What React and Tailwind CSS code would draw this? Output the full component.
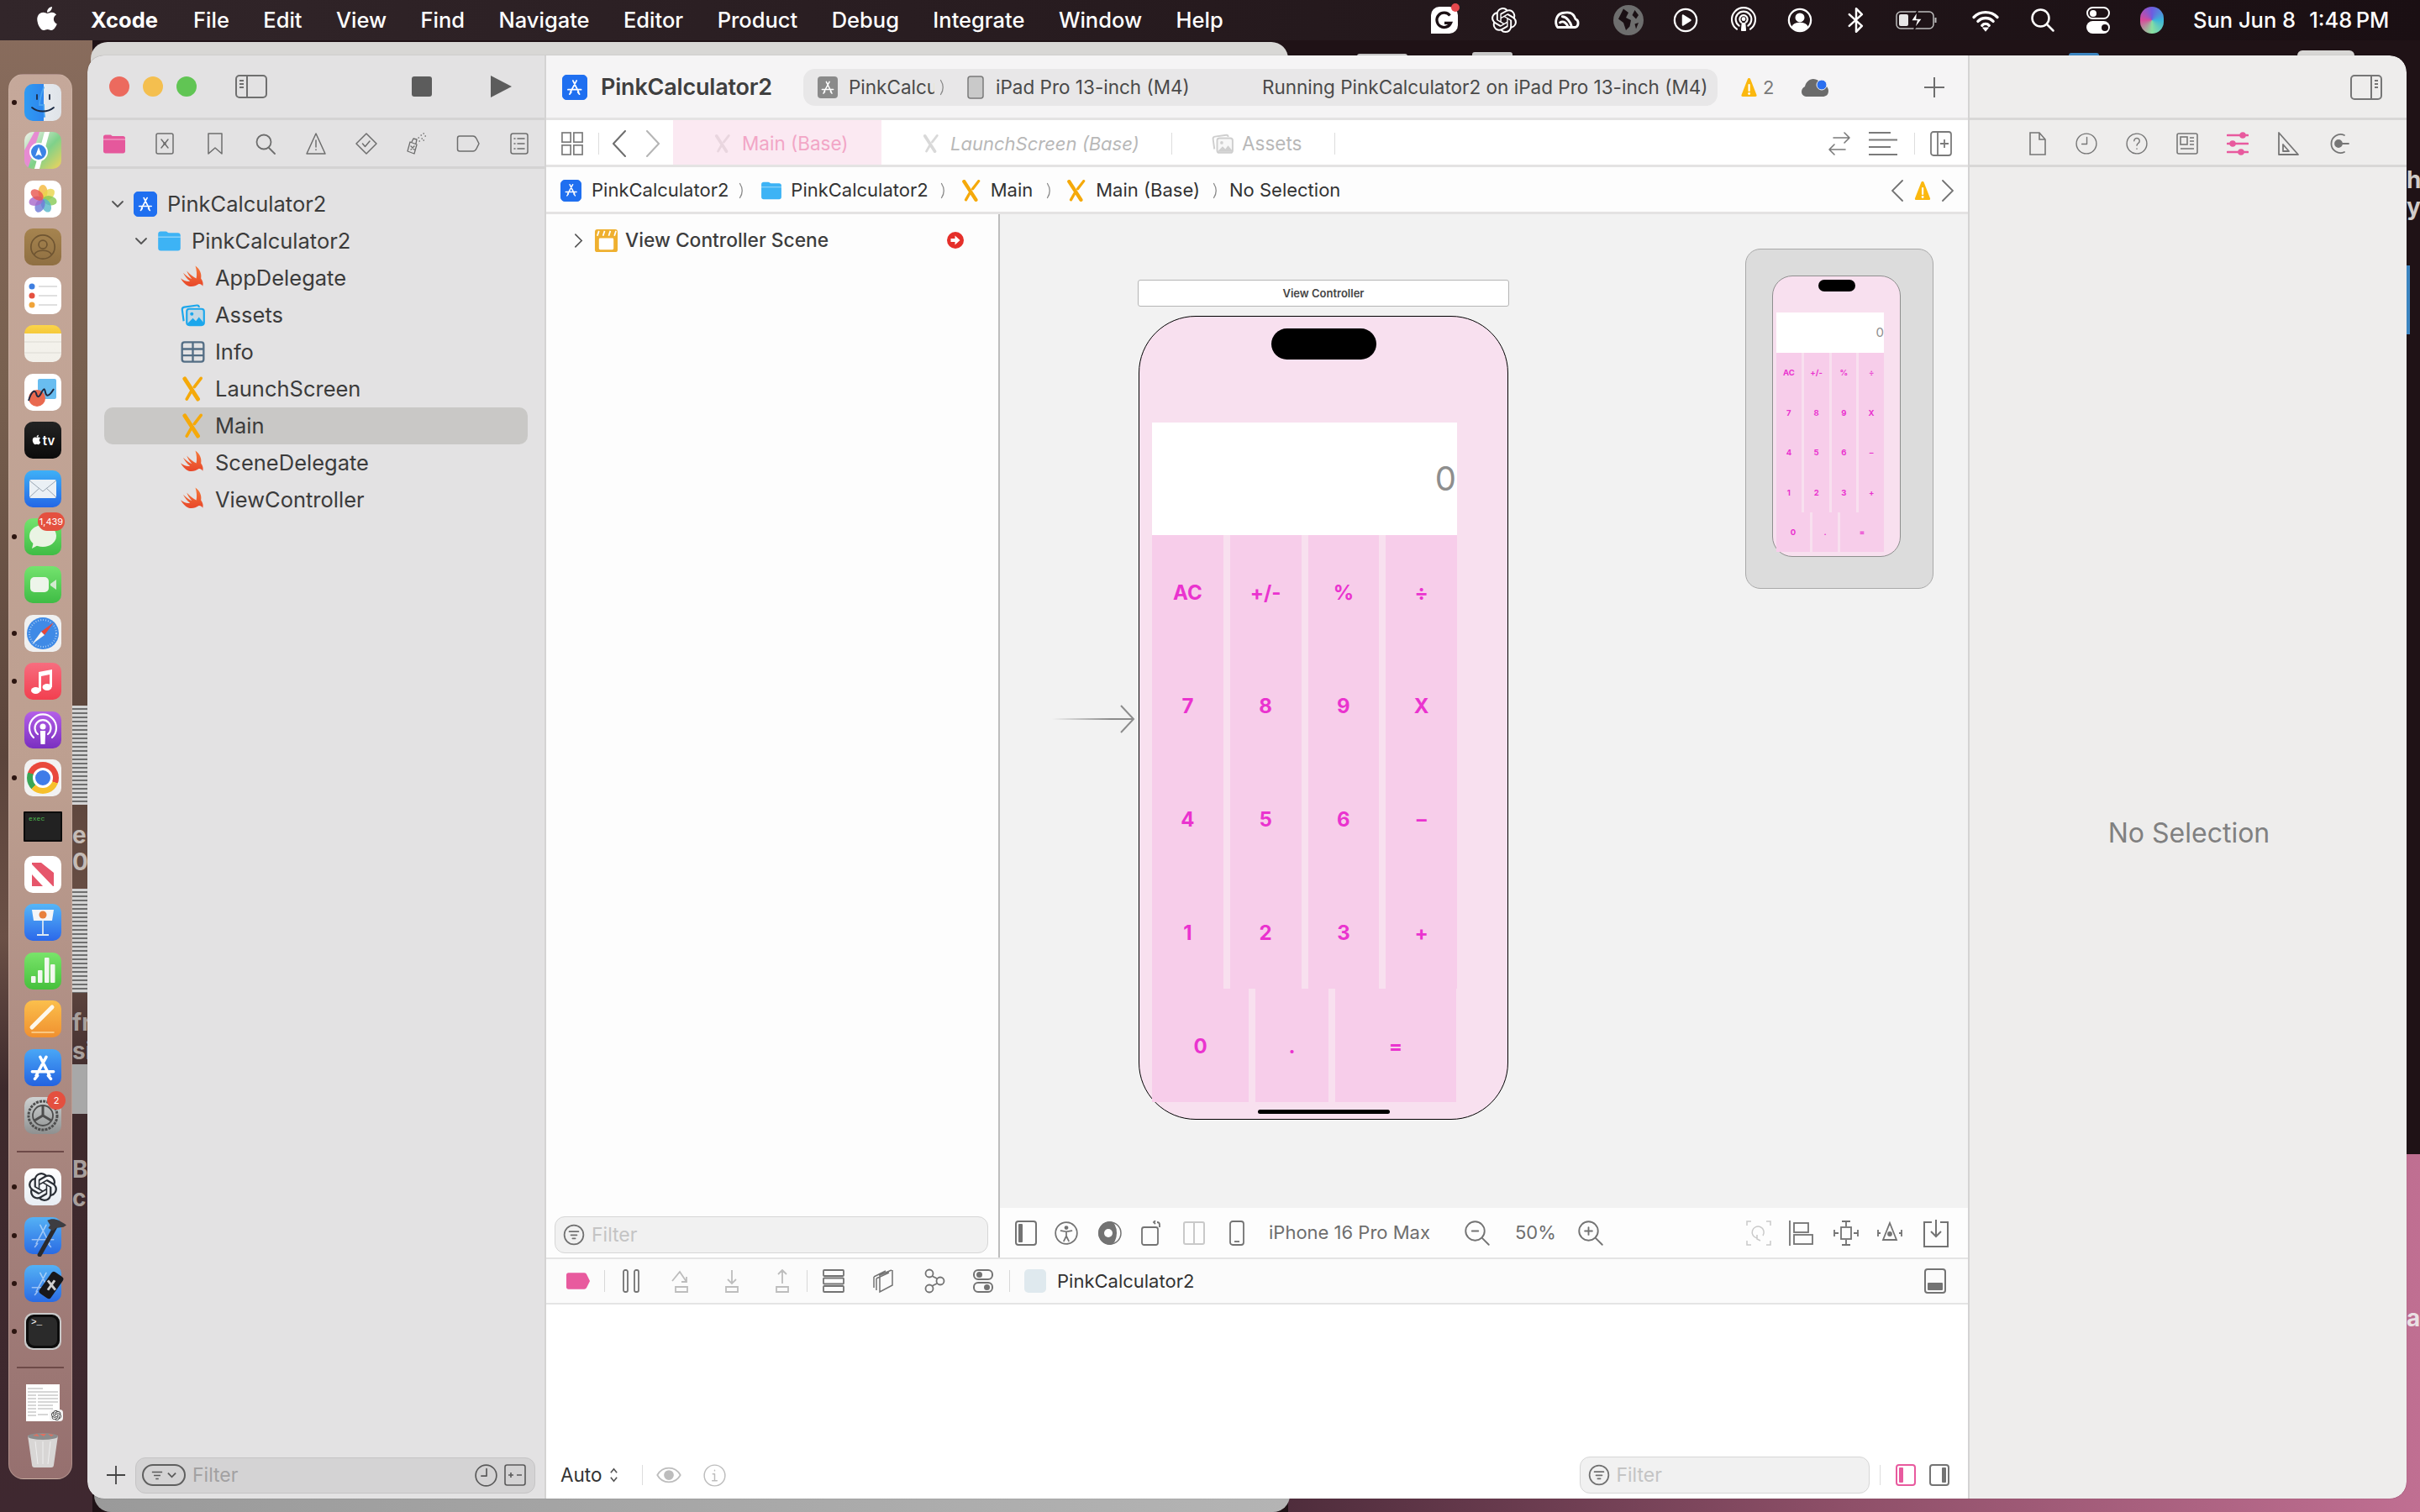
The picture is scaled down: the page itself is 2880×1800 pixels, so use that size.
import React from 'react';
import { FaApple } from 'react-icons/fa';
import { SiOpenai } from 'react-icons/si';

const I = ({ c = '', children, v = '0 0 24 24', sw = 1.5 }) => (
  <svg viewBox={v} fill="none" stroke="currentColor" strokeWidth={sw} strokeLinecap="round" strokeLinejoin="round" className={c}>{children}</svg>
);

const AGlyph = ({ c = '', sw = 1.8 }) => (
  <I c={c} sw={sw}><path d="M10 4l7 14M14.5 4L7 18M4 15h16M16 18l2 2.5M8 18l-2 2.5" /></I>
);
const AppIcon = ({ c = '' }) => (
  <div className={`rounded-[5px] bg-[#1f6ff0] border border-[#1f6ff0] flex items-center justify-center shrink-0 text-white ${c}`}>
    <AGlyph c="w-[84%] h-[84%]" />
  </div>
);
const Swift = ({ c = '' }) => (
  <svg viewBox="0 0 24 24" className={c}>
    <defs><linearGradient id="sw" x1="0" y1="0" x2="0" y2="1"><stop offset="0" stopColor="#f5793a" /><stop offset="1" stopColor="#e8472a" /></linearGradient></defs>
    <path fill="url(#sw)" d="M14.5 0c4.2 3 6.500 7.500 5.500 12.500 1.800 2.300 2.500 5 1.700 7.500-.9-1.700-2.500-2.400-4.200-2-2.400 1.900-6.500 3-10 1.800C4.500 18.500 1.800 15.600 0 12.200c2.800 2.400 6.200 3.600 9.200 3C6.500 13 4 10 2.400 6.800c2.800 2.700 6 5 8.600 6.200-2.200-2.600-4-5.300-5-8 3.200 3.400 6.600 6.200 9.400 7.400C16.200 8.800 15.800 4 14.500 0z" />
  </svg>
);
const IB = ({ c = '', col = '#f5a90a' }) => (
  <svg viewBox="0 0 24 24" className={c} fill="none" stroke={col} strokeLinecap="round">
    <path d="M4 2l13 20" strokeWidth="4" />
    <path d="M20 1.500L13.500 10M10 15l-4 7" strokeWidth="3" />
  </svg>
);
const Folder = ({ c = '' }) => (
  <svg viewBox="0 0 24 22" className={c}><path fill="#3db3f5" d="M1 4c0-1.600 1-2.500 2.500-2.500h5c1.500 0 2 1.500 3 1.500h9C22 3 23 4 23 5.500V18c0 1.600-1 2.500-2.500 2.500h-17C2 20.500 1 19.600 1 18z" /><path stroke="#fff" strokeOpacity=".5" d="M1 7h22" /></svg>
);
const AssetsIcon = ({ c = '', col = '#1ca7ec' }) => (
  <svg viewBox="0 0 24 24" className={c} fill="none" stroke={col} strokeWidth="1.800" strokeLinejoin="round">
    <rect x="6" y="6" width="17" height="16" rx="2.500" fill={col} fillOpacity=".16" />
    <path d="M3 18l-1.500-11c-.2-1.500.6-2.500 2-2.700L16 2.500c1.400-.2 2 .6 2.200 2" />
    <circle cx="11" cy="11" r="1.700" fill={col} stroke="none" />
    <path d="M7 20l5-5 3 3 3-4 5 6v1H7z" fill={col} stroke="none" />
  </svg>
);
const Warn = ({ c = '' }) => (
  <svg viewBox="0 0 20 24" className={c}><path fill="#fbb80f" d="M10 1c.9 0 1.400.5 1.700 1.300L19 21c.4 1.200-.3 2-1.500 2h-15C1.300 23 .6 22.200 1 21L8.300 2.300C8.600 1.500 9.100 1 10 1z" /><rect x="9" y="8" width="2.200" height="9" rx="1" fill="#fff" /><circle cx="10.100" cy="19.500" r="1.400" fill="#fff" /></svg>
);
const Chev = ({ c = '' }) => (
  <svg viewBox="0 0 8 20" className={`w-[8px] h-[20px] text-[#8a8a8a] shrink-0 ${c}`} fill="none" stroke="currentColor" strokeWidth="1.300" strokeLinecap="round"><path d="M1.500 1.500Q7 10 1.500 18.500" /></svg>
);
const Filt = ({ c = '' }) => (
  <I c={c} sw={1.600}><circle cx="12" cy="12" r="10.500" /><path d="M7 8.500h10M8.800 12.300h6.400M10.500 16h3" /></I>
);

const Badge = ({ children, c }) => (
  <div className={`absolute rounded-full bg-[#e4503f] text-white text-[11px] h-[22px] flex items-center justify-center z-10 ${c}`}>{children}</div>
);
const Dot = () => <div className="absolute -left-[15px] top-[19px] w-[6px] h-[6px] rounded-full bg-[#2c1510]" />;

const Tile = ({ c = '', children, dot, extra }) => (
  <div className="relative w-[44px] h-[44px] shrink-0">
    {dot && <Dot />}
    <div className={`w-full h-full rounded-[10px] overflow-hidden flex items-center justify-center ${c}`}>{children}</div>
    {extra}
  </div>
);

function Dock() {
  const Sep = () => <div className="w-[56px] h-[2px] bg-[#6e4a48] my-[6px] -ml-[6px] shrink-0" />;
  return (
    <div className="w-[76px] h-[1673px] mt-[40px] ml-[10px] shrink-0 rounded-[18px] bg-gradient-to-b from-[#c5a89a] via-[#bd9f90] to-[#96706f] border border-[#d5bdb2]/40 flex flex-col items-center gap-[13.450px] pt-[11px] pl-[6px] relative z-10">
      <Tile dot c="bg-[linear-gradient(90deg,#2e9bf3_0,#2e86ee_52%,#e6eaef_52%,#dfe3e8_100%)]">
        <svg viewBox="0 0 44 44" className="w-full h-full" fill="none" stroke="#1b2a44" strokeWidth="1.800" strokeLinecap="round"><path d="M23 4c-3 8-5 14-5 21h5c0 5 0 8 1 14" stroke="#4aa4f0" /><path d="M15 13v5M30 13v5M9 28c7 6 19 6 26 0" /></svg>
      </Tile>
      <Tile c="bg-[linear-gradient(135deg,#f5f3ee_0,#7fd18a_55%,#f3d35a_100%)]">
        <svg viewBox="0 0 44 44" className="w-full h-full"><path d="M0 22L12 0h6L4 44H0z" fill="#e78bd2" /><path d="M24 0h6L18 44h-6z" fill="#fff" /><circle cx="17" cy="24" r="10" fill="#3b83e6" stroke="#fff" strokeWidth="2" /><path d="M17 18l-4 11 4-2 4 2z" fill="#fff" /></svg>
      </Tile>
      <Tile c="bg-white">
        <svg viewBox="0 0 44 44" className="w-full h-full">
          {[['#f4b73a', 0], ['#e9d44a', 51], ['#86c955', 102], ['#56b7c9', 153], ['#6b78d6', 204], ['#a866c9', 255], ['#e8554e', 306]].map(([f, r]) => (
            <ellipse key={r} cx="22" cy="13.500" rx="5.500" ry="8.500" fill={f} fillOpacity=".8" transform={`rotate(${r} 22 22)`} />
          ))}
        </svg>
      </Tile>
      <Tile c="bg-[linear-gradient(180deg,#a6844f,#8f6f42)]">
        <I c="w-[34px] h-[34px] text-[#6f5532]" sw={1.200}><circle cx="12" cy="12" r="10" /><circle cx="12" cy="10" r="3.500" /><path d="M5 18c2-4 12-4 14 0" /></I>
      </Tile>
      <Tile c="bg-white">
        <svg viewBox="0 0 44 44" className="w-full h-full"><circle cx="9" cy="11" r="3.500" fill="#3f7fe0" /><circle cx="9" cy="22" r="3.500" fill="#e4503f" /><circle cx="9" cy="33" r="3.500" fill="#f0a43a" /><path d="M17 11h22M17 22h22M17 33h22" stroke="#d6d6d6" strokeWidth="1.400" /></svg>
      </Tile>
      <Tile c="bg-[linear-gradient(180deg,#fbd44b_0,#f5c93a_22%,#f4f2ec_22%,#f2f0ea_100%)]">
        <svg viewBox="0 0 44 44" className="w-full h-full"><path d="M0 20h44M0 33h44" stroke="#dcdad3" strokeWidth="1" /></svg>
      </Tile>
      <Tile c="bg-white">
        <svg viewBox="0 0 44 44" className="w-full h-full" fill="none"><rect x="16" y="6" width="22" height="24" rx="2" fill="#69bdf0" /><circle cx="15" cy="29" r="10" fill="#e9694f" /><path d="M5 32c3-10 7-14 9-9 1 5 3 6 6 0s4-6 5-1 4 6 10-4" stroke="#1f2b44" strokeWidth="2" /></svg>
      </Tile>
      <Tile c="bg-[linear-gradient(180deg,#232323,#0b0b0b)] text-white gap-[1px]">
        <FaApple className="text-[13px] -mt-[2px]" /><span className="text-[15px] font-semibold leading-none">tv</span>
      </Tile>
      <Tile c="bg-[linear-gradient(180deg,#3eb0f7,#2467e6)]">
        <svg viewBox="0 0 44 44" className="w-full h-full"><rect x="6" y="11" width="32" height="22" rx="2" fill="#eaf0f5" /><path d="M6 12l16 13 16-13M6 32l12-11M38 32L26 21" stroke="#9aa6b2" strokeWidth="1" fill="none" /></svg>
      </Tile>
      <Tile dot c="bg-[linear-gradient(180deg,#74e36e,#3fbc45)]" extra={<Badge c="w-[32px] left-[16px] -top-[7px]">1,439</Badge>}>
        <svg viewBox="0 0 44 44" className="w-full h-full"><ellipse cx="22" cy="21" rx="16" ry="13" fill="#eaf4e4" /><path d="M11 28l-2 8 9-5z" fill="#eaf4e4" /></svg>
      </Tile>
      <Tile c="bg-[linear-gradient(180deg,#74e36e,#3fbc45)]">
        <svg viewBox="0 0 44 44" className="w-full h-full"><rect x="7" y="13" width="22" height="18" rx="5" fill="#edf5ea" /><path d="M31 21l7-5v12l-7-5z" fill="#d3ead0" /></svg>
      </Tile>
      <Tile dot c="bg-[#f0f0f0]">
        <svg viewBox="0 0 44 44" className="w-full h-full"><circle cx="22" cy="22" r="19" fill="#3f8ae6" /><circle cx="22" cy="22" r="16" fill="none" stroke="#a4c9f2" strokeWidth="2" strokeDasharray="1 2" /><path d="M20 20l15-11-11 15z" fill="#e5473a" /><path d="M20 20L9 35l15-11z" fill="#f5f5f5" /></svg>
      </Tile>
      <Tile dot c="bg-[linear-gradient(180deg,#f76d7f,#f23f4f)]">
        <svg viewBox="0 0 44 44" className="w-full h-full" fill="#fff"><path d="M17 11l16-3v21h-3V14l-10 2v18h-3z" /><ellipse cx="13.500" cy="33" rx="5.500" ry="4" /><ellipse cx="27" cy="29" rx="5.500" ry="4" /></svg>
      </Tile>
      <Tile c="bg-[linear-gradient(180deg,#b45fe8,#7a2fc0)]">
        <svg viewBox="0 0 44 44" className="w-full h-full" fill="none" stroke="#fff" strokeWidth="2.200" strokeLinecap="round"><path d="M11 31a16 16 0 1 1 22 0M16 27a9.500 9.500 0 1 1 12 0" /><circle cx="22" cy="18" r="3.500" fill="#fff" stroke="none" /><path d="M20 24h4l-.5 14h-3z" fill="#fff" stroke="#fff" /></svg>
      </Tile>
      <Tile dot c="bg-[#f2f2f2]">
        <div className="w-[38px] h-[38px] rounded-full bg-[conic-gradient(#e9493c_0deg_110deg,#f6c02c_110deg_225deg,#3aa655_225deg_290deg,#e9493c_290deg)] flex items-center justify-center">
          <div className="w-[18px] h-[18px] rounded-full bg-[#3f7ce8] border-[3px] border-white box-content" />
        </div>
      </Tile>
      <div className="relative w-[46px] h-[36px] my-[4px] shrink-0 bg-[#222] border-[2px] border-[#0b0b0b] pl-[4px] text-[#4dbb4f] text-[8px] leading-[14px] [font-family:'Liberation_Mono',monospace] rounded-[1px]">exec</div>
      <Tile c="bg-white">
        <svg viewBox="0 0 44 44" className="w-full h-full"><rect x="9" y="8" width="26" height="28" fill="#e6566b" /><path d="M9 10l25 26H22L9 22zM20 8h15v12z" fill="#fff" /></svg>
      </Tile>
      <Tile c="bg-[linear-gradient(180deg,#56b6f7,#2b68ea)]">
        <svg viewBox="0 0 44 44" className="w-full h-full"><path d="M9 7h26l-2 13H11z" fill="#f4f6f8" /><circle cx="22" cy="13" r="4.500" fill="#e8803c" /><path d="M22 20v17M15 37h14" stroke="#dbe7f2" strokeWidth="1.800" /></svg>
      </Tile>
      <Tile c="bg-[linear-gradient(180deg,#79e46a,#46c03c)]">
        <svg viewBox="0 0 44 44" className="w-full h-full" fill="#f2f8ef"><rect x="8" y="28" width="5.500" height="8" rx="1" /><rect x="16" y="21" width="5.500" height="15" rx="1" /><rect x="24" y="6" width="5.500" height="30" rx="1" /><rect x="31" y="14" width="5.500" height="22" rx="1" /></svg>
      </Tile>
      <Tile c="bg-[linear-gradient(180deg,#fbbf4c,#f0902f)]">
        <svg viewBox="0 0 44 44" className="w-full h-full" fill="none" strokeLinecap="round"><path d="M9 32L33 8" stroke="#fdf8ec" strokeWidth="5" /><path d="M9 38h26" stroke="#fdd89b" strokeWidth="1.500" /></svg>
      </Tile>
      <Tile c="bg-[linear-gradient(180deg,#49a7f6,#2362e0)] text-white">
        <AGlyph c="w-[38px] h-[38px]" sw={2.200} />
      </Tile>
      <Tile c="bg-[linear-gradient(180deg,#cfd2d2,#8e9090)]" extra={<Badge c="w-[22px] left-[27px] -top-[7px]">2</Badge>}>
        <svg viewBox="0 0 44 44" className="w-full h-full" fill="none" stroke="#4d4d4d"><circle cx="22" cy="22" r="17" strokeWidth="3" strokeDasharray="3 1.200" /><circle cx="22" cy="22" r="12" strokeWidth="1.800" /><path d="M22 22V11M22 22l10 6M22 22l-10 6" strokeWidth="3" /></svg>
      </Tile>
      <Sep />
      <Tile dot c="bg-[linear-gradient(180deg,#fff,#e8edf3)] text-[#2a2f36]"><SiOpenai className="text-[34px]" /></Tile>
      <Tile dot c="bg-[linear-gradient(180deg,#54b1f5,#2a6be3)] !overflow-visible !rounded-[10px]" >
        <AGlyph c="w-[38px] h-[38px] text-white/50" sw={1} />
        <svg viewBox="0 0 44 44" className="absolute -top-[3px] -left-[0px] w-[50px] h-[50px]"><path d="M34 10L16 42" stroke="#2a2a2e" strokeWidth="4.500" strokeLinecap="round" /><path d="M24 6c6-3 12-1 20 5l-3 2-8 1-3 3-5-3 2-3z" fill="#3d3d42" /></svg>
      </Tile>
      <Tile dot c="bg-[linear-gradient(180deg,#54b1f5,#2a6be3)] !overflow-visible">
        <AGlyph c="w-[38px] h-[38px] text-white/50" sw={1} />
        <svg viewBox="0 0 44 44" className="absolute top-[6px] left-[14px] w-[36px] h-[36px]"><rect x="12" y="3" width="20" height="38" rx="4" transform="rotate(35 22 22)" fill="#18181b" /><path d="M17 15l11 14M27 15L17 29" stroke="#cfcfcf" strokeWidth="3.500" /></svg>
      </Tile>
      <Tile dot c="bg-[#c9c9c9] p-[2px]">
        <div className="w-full h-full rounded-[9px] bg-[#0c0c0c] p-[3px]">
          <div className="w-full h-full rounded-[7px] bg-[#2a2a2a] text-white text-[11px] leading-[12px] pl-[3px] [font-family:'Liberation_Mono',monospace]">&gt;_</div>
        </div>
      </Tile>
      <Sep />
      <div className="relative w-[40px] h-[44px] shrink-0 bg-white">
        <svg viewBox="0 0 40 44" className="w-full h-full" stroke="#9b9b9b" strokeWidth=".8"><path d="M2 5h18M2 9h36M2 13h10M14 13h24M2 17h10M14 17h24M2 21h10M14 21h24M2 25h10M14 25h18M2 29h10M14 29h18M2 33h10M2 37h10M14 36h12" /></svg>
        <div className="absolute -right-[4px] bottom-0 w-[16px] h-[14px] rounded-[4px] bg-[#f3f3f3] flex items-center justify-center text-[#333]"><SiOpenai className="text-[12px]" /></div>
      </div>
      <svg viewBox="0 0 44 44" className="w-[44px] h-[44px] -mt-[2px] shrink-0"><path d="M4 5h36l-5 35c-.2 2-1 3-3 3H12c-2 0-2.800-1-3-3z" fill="#d8d6d5" /><ellipse cx="22" cy="6" rx="18" ry="4" fill="#8c8c8c" /><path d="M10 5l5-2 3 3zM18 3l5 3 3-3zM28 3l4 3 3-2z" fill="#e07060" /><path d="M13 12l3 27M22 12v27M31 12l-3 27" stroke="#eeeeee" strokeWidth="1" /></svg>
    </div>
  );
}

const Menu = () => {
  const labels = ['File', 'Edit', 'View', 'Find', 'Navigate', 'Editor', 'Product', 'Debug', 'Integrate', 'Window', 'Help'];
  return (
    <div className="relative z-20 h-[48px] flex items-center bg-[linear-gradient(90deg,#32262a,#261a1e_50%,#1a0f13)] text-white text-[25.500px] shrink-0">
      <FaApple className="ml-[40px] text-[32px] -mt-[4px]" />
      <span className="ml-[36px] font-bold w-[82px]">Xcode</span>
      <div className="flex ml-[40px] gap-[40.400px]">{labels.map((l) => <span key={l} className="font-medium">{l}</span>)}</div>
      <div className="absolute left-[1703px] top-0 h-[48px] flex items-center text-white">
        <div className="relative w-[32px] h-[32px] bg-white rounded-[10px] rounded-bl-none text-[#1a0f13] flex items-center justify-center shrink-0">
          <svg viewBox="0 0 24 24" className="w-[26px] h-[26px]" fill="none" stroke="currentColor" strokeWidth="3"><path d="M18 7a8 8 0 1 0 1 8h-7" /></svg>
          <div className="absolute -top-[4px] right-[-2px] w-[10px] h-[10px] rounded-full bg-[#e5484d]" />
        </div>
        <SiOpenai className="ml-[40px] text-[30px] shrink-0" />
        <I c="ml-[42px] w-[36px] h-[34px] shrink-0" sw={2}><path d="M4 18c-3-4-1-11 4-12s9-1 11 5c3 1 3 6 0 7zM8 9c3 0 7 4 8 9M6 14c3-2 6 1 7 4" /></I>
        <div className="ml-[37px] w-[36px] h-[36px] rounded-full bg-[#6e6e6e] shrink-0 flex items-center justify-center text-[#1a0f13]">
          <svg viewBox="0 0 24 24" className="w-full h-full" fill="currentColor"><path d="M8 3l4 3-2 4 4 2-1 5-3 3-2-6-4-3zM17 4l3 4-2 3-3-3zM17 15l3-1-2 5z" /></svg>
        </div>
        <I c="ml-[35px] w-[30px] h-[30px] shrink-0" sw={1.800}><circle cx="12" cy="12" r="10.500" /><path d="M9.500 7.500l7 4.500-7 4.500z" fill="currentColor" /></I>
        <I c="ml-[38px] w-[32px] h-[32px] shrink-0" sw={1.600}><path d="M6 20a10.500 10.500 0 1 1 12 0M8 17a7 7 0 1 1 8 0M10 14a3.500 3.500 0 1 1 4 0" /><circle cx="12" cy="11" r="1" fill="currentColor" /><path d="M11 15h2l.5 6h-3z" fill="currentColor" /></I>
        <I c="ml-[36px] w-[30px] h-[30px] shrink-0" sw={1.800}><circle cx="12" cy="12" r="10.500" /><circle cx="12" cy="9.500" r="3.500" fill="currentColor" /><path d="M5 18.500c2-4.500 12-4.500 14 0-3 3.500-11 3.500-14 0z" fill="currentColor" /></I>
        <I c="ml-[41px] w-[22px] h-[34px] shrink-0" sw={1.800} v="0 0 16 24"><path d="M2 7l11 10-5 5V2l5 5L2 17" /></I>
        <svg viewBox="0 0 52 24" className="ml-[36px] w-[52px] h-[26px] shrink-0" fill="none" stroke="#bdbdbd" strokeWidth="1.500"><rect x="1" y="2" width="44" height="20" rx="5" /><path d="M47.500 9v6" strokeWidth="2" /><path d="M26 1l-8 12h7l-3 10 10-13h-7z" fill="#fff" stroke="#1a0f13" /><rect x="4" y="5" width="11" height="14" rx="2" fill="#e6e6e6" stroke="none" /></svg>
        <svg viewBox="0 0 24 20" className="ml-[38px] w-[34px] h-[28px] shrink-0" fill="none" stroke="#fff" strokeWidth="2.400" strokeLinecap="round"><path d="M2 7.500a14 14 0 0 1 20 0M5.500 11a9 9 0 0 1 13 0M9 14.500a4 4 0 0 1 6 0" /><path d="M12 19l-2-2.500h4z" fill="#fff" strokeWidth="1" /></svg>
        <I c="ml-[36px] w-[30px] h-[30px] shrink-0" sw={2}><circle cx="10" cy="10" r="8" /><path d="M16 16l6 6" /></I>
        <div className="ml-[37px] w-[28px] h-[32px] shrink-0 flex flex-col gap-[2px]">
          <div className="h-[15px] rounded-full border-[2px] border-white flex items-center pl-[2px]"><div className="w-[8px] h-[8px] rounded-full bg-white" /></div>
          <div className="h-[15px] rounded-full bg-white flex items-center justify-end pr-[2px]"><div className="w-[8px] h-[8px] rounded-full bg-[#1a0f13]" /></div>
        </div>
        <div className="ml-[36px] w-[28px] h-[32px] rounded-full bg-[conic-gradient(#6e5be0,#3bb5d9,#8ae0a0,#d84a9a,#6e5be0)] shrink-0" />
        <span className="ml-[35px] font-medium whitespace-nowrap">Sun Jun 8</span>
        <span className="ml-[16px] font-medium whitespace-nowrap">1:48{'\u2009'}PM</span>
      </div>
    </div>
  );
};

const TreeRow = ({ pl, chev, icon, label, sel }) => (
  <div className={`h-[44px] flex items-center text-[25.500px] text-[#3b3b3b] ${sel ? 'bg-[#c9c8c6] rounded-[10px]' : ''}`}>
    <div className={pl}>{chev && <svg viewBox="0 0 16 10" className="w-[16px] h-[10px] text-[#555]" fill="none" stroke="currentColor" strokeWidth="1.800" strokeLinecap="round" strokeLinejoin="round"><path d="M2 2l6 6 6-6" /></svg>}</div>
    {icon}
    <span className="ml-[12px]">{label}</span>
  </div>
);

function Navigator() {
  return (
    <div className="w-[546px] shrink-0 flex flex-col bg-[#e3e2e3] rounded-l-[20px] border-r-[2px] border-[#d4d3d3]">
      <div className="h-[77px] flex items-center pl-[26px] border-b-[3px] border-[#d4d3d3] shrink-0 text-[#6f6f6f]">
        <div className="w-[24px] h-[24px] rounded-full bg-[#ec6a5e]" />
        <div className="ml-[16px] w-[24px] h-[24px] rounded-full bg-[#f4bf4f]" />
        <div className="ml-[16px] w-[24px] h-[24px] rounded-full bg-[#61c554]" />
        <svg viewBox="0 0 38 28" className="ml-[46px] w-[38px] h-[28px]" fill="none" stroke="currentColor" strokeWidth="2"><rect x="1" y="1" width="36" height="26" rx="4" /><path d="M14 1v26M5 7h5M5 11h5M5 15h5" /></svg>
        <div className="ml-[172px] w-[24px] h-[24px] rounded-[3px] bg-[#5c5c5c]" />
        <svg viewBox="0 0 26 26" className="ml-[69px] w-[26px] h-[26px]" fill="#5c5c5c"><path d="M1 0l25 13L1 26z" /></svg>
      </div>
      <div className="h-[58px] flex items-center pl-[19px] gap-[34px] border-b-[3px] border-[#d4d3d3] shrink-0 text-[#6e6e6e]">
        <svg viewBox="0 0 26 26" className="w-[26px] h-[26px]"><path fill="#e5589c" d="M0 5c0-1.500 1-2.500 2.500-2.500h6c1 0 1.500 1.500 2.500 1.500h12.500C25 4 26 5 26 6.500V22c0 1.500-1 2.500-2.500 2.500h-21C1 24.500 0 23.500 0 22z" /><path d="M0 8h26" stroke="#f6b5d3" strokeWidth="1" /></svg>
        <I c="w-[26px] h-[26px]" v="0 0 26 26" sw={1.500}><rect x="3" y="1" width="20" height="24" rx="2" /><path d="M9 8l8 10M17 8L9 18" /><circle cx="13" cy="13" r="1" fill="currentColor" /></I>
        <I c="w-[26px] h-[26px]" v="0 0 26 26" sw={1.500}><path d="M5 1h16v24l-8-7-8 7z" /></I>
        <I c="w-[26px] h-[26px]" v="0 0 26 26" sw={1.800}><circle cx="11" cy="11" r="8.500" /><path d="M17 18l7 7" /></I>
        <I c="w-[26px] h-[26px]" v="0 0 26 26" sw={1.500}><path d="M13 1l11 24H2zM13 9v8M13 20v.5" /></I>
        <I c="w-[26px] h-[26px]" v="0 0 26 26" sw={1.500}><path d="M13 1l12 12-12 12L1 13zM8.500 13l3 3.500L17 10" /></I>
        <I c="w-[26px] h-[26px]" v="0 0 26 26" sw={1.300}><path d="M5 11l8 3-3 11-8-3zM7 11l2-4 4 1-1 5M6 16l4 4M10 16l-4 4" /><path d="M15 6h.5M18 3h.5M21 1h.5M19 7h.5M23 4h.5M16 10h.5M21 9h.5" /></I>
        <I c="w-[28px] h-[26px]" v="0 0 28 26" sw={1.500}><path d="M4 4h16c2 0 3 1 4 3l3 6-3 6c-1 2-2 3-4 3H4c-1.500 0-2.500-1-2.500-2.500v-13C1.500 5 2.500 4 4 4z" /></I>
        <I c="w-[26px] h-[26px]" v="0 0 26 26" sw={1.500}><rect x="3" y="1" width="20" height="24" rx="2.500" /><path d="M7 7h1M7 13h1M7 19h1M11 7h8M11 13h8M11 19h8" /></I>
      </div>
      <div className="flex-1 px-[20px] pt-[20px] flex flex-col">
        <TreeRow pl="w-[35px] pl-[8px]" chev icon={<AppIcon c="w-[28px] h-[30px]" />} label="PinkCalculator2" />
        <TreeRow pl="w-[63px] pl-[36px]" chev icon={<Folder c="w-[29px] h-[28px]" />} label="PinkCalculator2" />
        <TreeRow pl="w-[91px]" icon={<Swift c="w-[29px] h-[30px]" />} label="AppDelegate" />
        <TreeRow pl="w-[91px]" icon={<AssetsIcon c="w-[29px] h-[30px]" />} label="Assets" />
        <TreeRow pl="w-[91px]" icon={<svg viewBox="0 0 24 24" className="w-[29px] h-[28px]" fill="none" stroke="#546e85" strokeWidth="2"><rect x="1" y="2" width="22" height="20" rx="2.500" /><path d="M1 9h22M1 15.500h22M12 2v20" /></svg>} label="Info" />
        <TreeRow pl="w-[91px]" icon={<IB c="w-[29px] h-[30px]" />} label="LaunchScreen" />
        <TreeRow sel pl="w-[91px]" icon={<IB c="w-[29px] h-[30px]" />} label="Main" />
        <TreeRow pl="w-[91px]" icon={<Swift c="w-[29px] h-[30px]" />} label="SceneDelegate" />
        <TreeRow pl="w-[91px]" icon={<Swift c="w-[29px] h-[30px]" />} label="ViewController" />
      </div>
      <div className="h-[50px] mb-[3px] flex items-center shrink-0">
        <svg viewBox="0 0 24 24" className="ml-[22px] w-[24px] h-[24px] text-[#444]" fill="none" stroke="currentColor" strokeWidth="1.800"><path d="M12 1v22M1 12h22" /></svg>
        <div className="ml-[11px] w-[476px] h-[43px] rounded-[12px] bg-[#d4d3d4] border border-[#c5c4c5] flex items-center pl-[7px] pr-[10px] text-[#5a5a5a]">
          <div className="w-[52px] h-[26px] rounded-full border-[2px] border-[#5f5f5f] flex items-center justify-center gap-[5px]">
            <svg viewBox="0 0 16 12" className="w-[14px] h-[11px]" fill="none" stroke="currentColor" strokeWidth="1.600"><path d="M1 1.500h14M3.500 6h9M6 10.500h4" /></svg>
            <svg viewBox="0 0 12 8" className="w-[11px] h-[8px]" fill="none" stroke="currentColor" strokeWidth="2"><path d="M1 1.500l5 5 5-5" /></svg>
          </div>
          <span className="ml-[8px] text-[#a2a1a2] text-[23px]">Filter</span>
          <I c="ml-auto w-[27px] h-[27px]" sw={1.500}><circle cx="12" cy="12" r="11" /><path d="M12.500 5v7.500H7" /></I>
          <svg viewBox="0 0 26 26" className="ml-[8px] w-[26px] h-[26px]" fill="none" stroke="currentColor" strokeWidth="1.600"><rect x="1" y="1" width="24" height="24" rx="2.500" /><path d="M5 13h6M8 10v6M15 13h6" /></svg>
        </div>
      </div>
    </div>
  );
}

const Key = ({ k, c = 'flex-1', t = 'text-[24px] pt-[2px]' }) => (
  <div className={`bg-[#f7cdea] flex items-center justify-center text-[#ea33cf] font-bold ${t} ${c}`}>{k}</div>
);
const rows = [['AC', '+/-', '%', '÷'], ['7', '8', '9', 'X'], ['4', '5', '6', '–'], ['1', '2', '3', '+']];

function Canvas() {
  return (
    <div className="relative flex-1 bg-[#f2f2f2] overflow-hidden">
      <svg viewBox="0 0 100 34" className="absolute left-[62px] top-[584px] w-[100px] h-[34px]" fill="none">
        <defs><linearGradient id="arr" gradientUnits="userSpaceOnUse" x1="0" y1="0" x2="100" y2="0"><stop offset="0" stopColor="#8c8c8c" stopOpacity="0" /><stop offset=".7" stopColor="#8c8c8c" /></linearGradient></defs>
        <path d="M0 17h97" stroke="url(#arr)" strokeWidth="2" />
        <path d="M82 1l15 16-15 16" stroke="#8c8c8c" strokeWidth="2" />
      </svg>
      <div className="absolute left-[164px] top-[78px] w-[442px] h-[32px] pt-[2px] bg-white border border-[#b5b5b5] rounded-[3px] flex items-center justify-center text-[13px] font-semibold text-[#444]">View Controller</div>
      <div className="absolute left-[165px] top-[121px] w-[440px] h-[957px] rounded-[68px] bg-[#f8e0ef] border border-black box-border pl-[15px] pt-[126px]">
        <div className="absolute left-[157px] top-[14px] w-[125px] h-[37px] rounded-full bg-black" />
        <div className="w-[363px] h-[134px] bg-white flex items-center justify-end pr-[1px] text-[40px] text-[#8e8e8e] font-normal">0</div>
        {rows.map((r) => (
          <div key={r[0]} className="w-[363px] h-[135px] flex gap-[8px]">{r.map((k) => <Key key={k} k={k} />)}</div>
        ))}
        <div className="w-[362px] h-[135px] flex gap-[8px]">
          <Key k="0" c="w-[115px]" />
          <Key k="." c="w-[87px]" />
          <Key k="=" c="w-[144px]" />
        </div>
        <div className="absolute left-[141px] bottom-[6px] w-[157px] h-[5px] rounded-full bg-black" />
      </div>
      <div className="absolute left-[887px] top-[41px] w-[224px] h-[405px] rounded-[18px] bg-[#dcdcdc] border border-[#a9a9a9] pl-[31px] pt-[31px]">
        <div className="relative w-[153px] h-[335px] rounded-[24px] bg-[#f8e0ef] border border-[#8f8f8f] pl-[4px] pt-[43px]">
          <div className="absolute left-[54px] top-[4px] w-[44px] h-[14px] rounded-full bg-black" />
          <div className="w-[128px] h-[48px] bg-white flex items-center justify-end text-[15px] text-[#8e8e8e] font-normal">0</div>
          {rows.map((r) => (
            <div key={r[0]} className="w-[128px] h-[47.500px] flex gap-[3px]">{r.map((k) => <Key key={k} k={k} t="text-[9.500px] pt-[1px]" />)}</div>
          ))}
          <div className="w-[128px] h-[47px] flex gap-[3px]">
            <Key k="0" c="w-[40px]" t="text-[9.500px] pt-[1px]" />
            <Key k="." c="w-[30px]" t="text-[9.500px] pt-[1px]" />
            <Key k="=" c="w-[52px]" t="text-[9.500px] pt-[1px]" />
          </div>
        </div>
      </div>
    </div>
  );
}

function CanvasBar() {
  return (
    <div className="h-[59px] bg-[#fdfdfd] flex items-center text-[#737373] shrink-0">
      <svg viewBox="0 0 26 30" className="ml-[18px] w-[26px] h-[30px]" fill="none" stroke="currentColor" strokeWidth="2"><rect x="1" y="1" width="24" height="28" rx="3" /><rect x="4" y="4" width="5" height="22" rx="1" fill="currentColor" stroke="none" /></svg>
      <I c="ml-[21px] w-[28px] h-[28px]" sw={1.500}><circle cx="12" cy="12" r="11" /><circle cx="12" cy="6.500" r="1.300" fill="currentColor" /><path d="M6.500 9.500L12 10.500l5.500-1M12 10.500V15l-2.500 5M12 15l2.500 5" /></I>
      <svg viewBox="0 0 28 28" className="ml-[24px] w-[28px] h-[28px]" fill="currentColor"><path d="M14 0a14 14 0 1 0 0 28 8 14 0 0 0 0-28z" /><circle cx="14" cy="14" r="13" fill="none" stroke="currentColor" strokeWidth="1.500" /><circle cx="12" cy="14" r="5" fill="#fff" /></svg>
      <svg viewBox="0 0 28 30" className="ml-[23px] w-[28px] h-[30px]" fill="none" stroke="currentColor" strokeWidth="1.800"><rect x="1" y="8" width="19" height="21" rx="2.500" /><path d="M22 8V5c0-2-1-3-3-3M17 0l-2 2 2 2" /></svg>
      <svg viewBox="0 0 26 28" className="ml-[22px] w-[26px] h-[28px] text-[#c9c9c9]" fill="none" stroke="currentColor" strokeWidth="2"><rect x="1" y="1" width="24" height="26" rx="2" /><path d="M13 1v26" /></svg>
      <svg viewBox="0 0 18 30" className="ml-[29px] w-[18px] h-[30px]" fill="none" stroke="currentColor" strokeWidth="1.800"><rect x="1" y="1" width="16" height="28" rx="3" /><path d="M6 25h6" /></svg>
      <span className="ml-[29px] text-[22px] text-[#6e6e6e] whitespace-nowrap w-[200px]">iPhone 16 Pro Max</span>
      <I c="ml-[33px] w-[30px] h-[30px]" sw={1.500}><circle cx="10" cy="10" r="9" /><path d="M7 10h6M16.500 16.500L23 23" /></I>
      <span className="ml-[30px] text-[22px] text-[#6e6e6e] w-[47px]">50%</span>
      <I c="ml-[28px] w-[30px] h-[30px]" sw={1.500}><circle cx="10" cy="10" r="9" /><path d="M6.500 10h7M10 6.500v7M16.500 16.500L23 23" /></I>
      <svg viewBox="0 0 30 30" className="ml-[170px] w-[30px] h-[30px] text-[#c9c9c9]" fill="none" stroke="currentColor" strokeWidth="1.500"><path d="M1 6V1h5M24 1h5v5M1 24v5h5M24 29h5v-5M20 18a7 7 0 1 0-7 3M13 17v5l4 2" /></svg>
      <svg viewBox="0 0 30 30" className="ml-[21px] w-[30px] h-[30px]" fill="none" stroke="currentColor" strokeWidth="1.800"><path d="M1 0v30" /><rect x="6" y="3" width="17" height="11" /><rect x="6" y="17" width="22" height="11" /></svg>
      <svg viewBox="0 0 30 30" className="ml-[23px] w-[30px] h-[30px]" fill="none" stroke="currentColor" strokeWidth="1.800"><path d="M10 1h10M15 1v6M10 29h10M15 23v6M1 11v8M1 15h5M29 11v8M24 15h5" /><rect x="9" y="8" width="12" height="14" /></svg>
      <svg viewBox="0 0 30 30" className="ml-[22px] w-[30px] h-[30px]" fill="none" stroke="currentColor" strokeWidth="1.800"><path d="M15 3l8 20H7zM1 11v8M1 15h3M29 11v8M26 15h3" /><circle cx="15" cy="16" r="2" fill="currentColor" /></svg>
      <svg viewBox="0 0 30 34" className="ml-[25px] w-[30px] h-[34px]" fill="none" stroke="currentColor" strokeWidth="2"><path d="M10 4H1v29h28V4h-9M15 1v20M9 15l6 6 6-6" /></svg>
    </div>
  );
}

function DebugBar() {
  const sep = 'w-[1px] h-[26px] bg-[#d8d8d8] shrink-0';
  return (
    <div className="h-[56px] bg-[#fbfbfb] border-t-[2px] border-b-[2px] border-[#e4e4e4] flex items-center text-[#737373] shrink-0 box-border">
      <svg viewBox="0 0 30 20" className="ml-[24px] w-[29px] h-[20px]"><path fill="#e85a9e" d="M0 2.500C0 1 1 0 2.500 0H22c1.500 0 2.500 1 3 2l4 8-4 8c-.5 1-1.500 2-3 2H2.500C1 20 0 19 0 17.500z" /></svg>
      <div className={`ml-[16px] ${sep}`} />
      <svg viewBox="0 0 20 28" className="ml-[21px] w-[20px] h-[28px]" fill="none" stroke="currentColor" strokeWidth="1.800"><rect x="1" y="1" width="5" height="26" rx="2" /><rect x="14" y="1" width="5" height="26" rx="2" /></svg>
      <svg viewBox="0 0 26 28" className="ml-[37px] w-[26px] h-[28px] text-[#bdbdbd]" fill="none" stroke="currentColor" strokeWidth="1.800"><path d="M2 14l9-11 8 12M19 9v6h-6M6 21h14v6H6z" /></svg>
      <svg viewBox="0 0 26 28" className="ml-[34px] w-[26px] h-[28px] text-[#bdbdbd]" fill="none" stroke="currentColor" strokeWidth="1.800"><path d="M13 1v16M8 12l5 5 5-5M6 21h14v6H6z" /></svg>
      <svg viewBox="0 0 26 28" className="ml-[34px] w-[26px] h-[28px] text-[#bdbdbd]" fill="none" stroke="currentColor" strokeWidth="1.800"><path d="M13 17V1M8 6l5-5 5 5M6 21h14v6H6z" /></svg>
      <div className={`ml-[16px] ${sep}`} />
      <svg viewBox="0 0 26 28" className="ml-[18px] w-[26px] h-[28px]" fill="none" stroke="currentColor" strokeWidth="1.800"><rect x="1" y="1" width="24" height="7" rx="1" /><rect x="1" y="10.500" width="24" height="7" rx="1" /><rect x="1" y="20" width="24" height="7" rx="1" /></svg>
      <svg viewBox="0 0 26 30" className="ml-[34px] w-[26px] h-[30px]" fill="none" stroke="currentColor" strokeWidth="1.500"><path d="M8 8l14 -6M4 12l15-7M1 10l14-7M8 8v20l15-8V2M4 12v14M1 10v13" /></svg>
      <svg viewBox="0 0 26 30" className="ml-[34px] w-[26px] h-[30px]" fill="none" stroke="currentColor" strokeWidth="1.800"><circle cx="7" cy="6" r="4.500" /><circle cx="20" cy="15" r="4.500" /><circle cx="7" cy="24" r="4.500" /><path d="M10 9l6 3M10 21l6-3" /></svg>
      <div className="ml-[33px] w-[24px] h-[28px] flex flex-col gap-[2px] shrink-0">
        <div className="h-[13px] rounded-[6px] border-[2px] border-[#737373] flex items-center pl-[2px]"><div className="w-[7px] h-[7px] rounded-full bg-[#737373]" /></div>
        <div className="h-[13px] rounded-[6px] border-[2px] border-[#737373] flex items-center justify-end pr-[2px]"><div className="w-[7px] h-[7px] rounded-full bg-[#737373]" /></div>
      </div>
      <div className={`ml-[19px] ${sep}`} />
      <div className="ml-[17px] w-[26px] h-[28px] rounded-[5px] bg-[#dfe9ee] shrink-0" />
      <span className="ml-[13px] text-[22px] text-[#333] w-[165px]">PinkCalculator2</span>
      <svg viewBox="0 0 26 30" className="ml-[867px] w-[26px] h-[30px]" fill="none" stroke="currentColor" strokeWidth="2"><rect x="1" y="1" width="24" height="28" rx="3" /><rect x="4" y="17" width="18" height="9" rx="1" fill="currentColor" stroke="none" /></svg>
    </div>
  );
}

function Editor() {
  return (
    <div className="w-[1692px] shrink-0 flex flex-col">
      <div className="h-[77px] pt-[2px] bg-[#f5f4f5] flex items-center shrink-0 border-b-[3px] border-[#e4e3e3]">
        <AppIcon c="ml-[19px] w-[30px] h-[30px]" />
        <span className="ml-[16px] w-[241px] text-[27px] font-semibold text-[#3f3f3f] -tracking-[.2px]">PinkCalculator2</span>
        <div className="w-[1088px] h-[44px] rounded-[14px] bg-[#e8e7e8] flex items-center text-[22.500px] text-[#4a4a4a] whitespace-nowrap">
          <div className="ml-[17px] w-[24px] h-[26px] rounded-[4px] bg-[#8a8a8a] text-white flex items-center justify-center"><AGlyph c="w-[20px] h-[20px]" /></div>
          <span className="ml-[13px] w-[102px] overflow-hidden">PinkCalculator2</span>
          <Chev c="ml-[6px]" />
          <svg viewBox="0 0 20 28" className="ml-[25px] w-[20px] h-[28px]" fill="#c9c9c9" stroke="#7a7a7a" strokeWidth="1.500"><rect x="1" y="1" width="18" height="26" rx="3" /></svg>
          <span className="ml-[14px] w-[317px]">iPad Pro 13-inch (M4)</span>
          <span>Running PinkCalculator2 on iPad Pro 13-inch (M4)</span>
        </div>
        <Warn c="ml-[27px] w-[21px] h-[24px]" />
        <span className="ml-[6px] text-[22px] text-[#7a7a7a] w-[12px]">2</span>
        <svg viewBox="0 0 32 24" className="ml-[34px] w-[32px] h-[24px]"><path fill="#6b6b6b" d="M7 23c-4 0-7-2-7-6 0-3 2-5 4-6 1-5 5-9 10-9 4 0 7 2 9 6 4 0 9 3 9 8s-3 7-7 7z" /><circle cx="24" cy="9" r="6" fill="#2b6ff0" stroke="#f5f4f5" strokeWidth="1" /></svg>
        <svg viewBox="0 0 24 24" className="ml-[114px] w-[24px] h-[24px] text-[#6e6e6e]" fill="none" stroke="currentColor" strokeWidth="2"><path d="M12 0v24M0 12h24" /></svg>
      </div>
      <div className="h-[56px] bg-white flex items-center shrink-0 border-b-[3px] border-[#e4e3e3] text-[#7a7a7a]">
        <svg viewBox="0 0 28 30" className="ml-[18px] mt-[3px] w-[26px] h-[28px]" fill="none" stroke="currentColor" strokeWidth="1.800"><rect x="1" y="1" width="11" height="12" /><rect x="16" y="1" width="11" height="12" /><rect x="1" y="17" width="11" height="12" /><rect x="16" y="17" width="11" height="12" /></svg>
        <div className="ml-[18px] mt-[3px] w-[1px] h-[26px] bg-[#ddd]" />
        <svg viewBox="0 0 16 32" className="ml-[16px] mt-[3px] w-[16px] h-[32px]" fill="none" stroke="#6e6e6e" strokeWidth="2" strokeLinecap="round"><path d="M15 1L1 16l14 15" /></svg>
        <svg viewBox="0 0 16 32" className="ml-[24px] mt-[3px] w-[16px] h-[32px]" fill="none" stroke="#b5b5b5" strokeWidth="2" strokeLinecap="round"><path d="M1 1l14 15L1 31" /></svg>
        <div className="ml-[16px] w-[248px] h-full bg-[#fbe9f2] flex items-center pl-[48px] pt-[3px]">
          <IB c="w-[22px] h-[26px]" col="#e9d6df" />
          <span className="ml-[12px] text-[22.500px] text-[#f2a6c6]">Main (Base)</span>
        </div>
        <div className="h-full flex items-center pt-[3px]">
          <IB c="ml-[48px] w-[22px] h-[26px]" col="#d9d9d9" />
          <span className="ml-[12px] text-[22px] italic text-[#b8b8b8] w-[263px] whitespace-nowrap">LaunchScreen (Base)</span>
          <div className="w-[1px] h-[26px] bg-[#ddd]" />
          <AssetsIcon c="ml-[46px] w-[28px] h-[26px]" col="#cfcfcf" />
          <span className="ml-[9px] text-[22.500px] text-[#b8b8b8] w-[110px]">Assets</span>
          <div className="w-[1px] h-[26px] bg-[#ddd]" />
          <svg viewBox="0 0 26 28" className="ml-[587px] w-[26px] h-[28px]" fill="none" stroke="currentColor" strokeWidth="1.600" strokeLinecap="round" strokeLinejoin="round"><path d="M25 7H6M19 1l6 6-6 6M1 21h19M7 15l-6 6 6 6" /></svg>
          <svg viewBox="0 0 36 28" className="ml-[21px] w-[36px] h-[28px]" fill="none" stroke="currentColor" strokeWidth="1.800"><path d="M1 1h26M1 9.500h34M1 18h26M1 27h34" /></svg>
          <div className="ml-[19px] w-[1px] h-[26px] bg-[#ddd]" />
          <svg viewBox="0 0 26 30" className="ml-[18px] w-[26px] h-[30px]" fill="none" stroke="currentColor" strokeWidth="1.800"><rect x="1" y="1" width="24" height="28" rx="3" /><path d="M9 1v28M17 10v10M12 15h10" /></svg>
        </div>
      </div>
      <div className="h-[56px] pt-[2px] bg-[#fdfdfd] flex items-center shrink-0 border-b-[3px] border-[#e4e3e3] text-[22px] text-[#333] whitespace-nowrap">
        <AppIcon c="ml-[17px] w-[25px] h-[26px]" />
        <span className="ml-[12px]">PinkCalculator2</span>
        <Chev c="ml-[12px]" />
        <Folder c="ml-[18px] w-[26px] h-[24px]" />
        <span className="ml-[10px]">PinkCalculator2</span>
        <Chev c="ml-[14px]" />
        <IB c="ml-[16px] w-[26px] h-[26px]" />
        <span className="ml-[10px]">Main</span>
        <Chev c="ml-[16px]" />
        <IB c="ml-[15px] w-[26px] h-[26px]" />
        <span className="ml-[10px]">Main (Base)</span>
        <Chev c="ml-[15px]" />
        <span className="ml-[12px]">No Selection</span>
        <div className="ml-auto flex items-center text-[#737373]">
          <svg viewBox="0 0 14 26" className="w-[14px] h-[26px]" fill="none" stroke="currentColor" strokeWidth="1.800" strokeLinecap="round"><path d="M13 1L1 13l12 12" /></svg>
          <Warn c="ml-[13px] w-[20px] h-[24px]" />
          <svg viewBox="0 0 14 26" className="ml-[13px] mr-[17px] w-[14px] h-[26px]" fill="none" stroke="currentColor" strokeWidth="1.800" strokeLinecap="round"><path d="M1 1l12 12L1 25" /></svg>
        </div>
      </div>
      <div className="flex-1 flex min-h-0">
        <div className="w-[540px] shrink-0 bg-[#fdfdfd] border-r-[2px] border-[#bdbdbd] flex flex-col">
          <div className="h-[62px] flex items-center">
            <svg viewBox="0 0 12 20" className="ml-[33px] w-[11px] h-[19px] text-[#555]" fill="none" stroke="currentColor" strokeWidth="1.800" strokeLinecap="round"><path d="M2 2l8 8-8 8" /></svg>
            <svg viewBox="0 0 30 30" className="ml-[13px] w-[29px] h-[29px]"><rect x="1" y="1" width="28" height="28" rx="3" fill="#efb02f" /><rect x="6" y="12" width="18" height="14" rx="1.500" fill="#fff" /><path d="M6 3l-2 6M13 3l-2 6M20 3l-2 6M27 3l-2 6" stroke="#fff" strokeWidth="1.800" /></svg>
            <span className="ml-[8px] text-[22.800px] font-medium text-[#3d3d3d] w-[383px]">View Controller Scene</span>
            <svg viewBox="0 0 20 20" className="w-[20px] h-[20px]"><circle cx="10" cy="10" r="10" fill="#e52f2a" /><path d="M4.500 8h5V4.500l6 5.500-6 5.500V12h-5z" fill="#fff" /></svg>
          </div>
          <div className="mt-auto ml-[10px] mb-[5px] w-[516px] h-[44px] rounded-[12px] bg-[#f1f1f1] border border-[#d6d6d6] flex items-center pl-[9px] text-[#707070]">
            <Filt c="w-[26px] h-[26px]" />
            <span className="ml-[8px] text-[23px] text-[#c4c4c4]">Filter</span>
          </div>
        </div>
        <div className="flex-1 flex flex-col min-w-0">
          <Canvas />
          <CanvasBar />
        </div>
      </div>
      <DebugBar />
      <div className="h-[231px] bg-white flex items-end pb-[6px] shrink-0 text-[#bdbdbd]">
        <div className="h-[44px] flex items-center w-full">
          <span className="ml-[17px] text-[22.500px] text-[#333]">Auto</span>
          <svg viewBox="0 0 12 22" className="ml-[9px] w-[11px] h-[20px] text-[#555]" fill="none" stroke="currentColor" strokeWidth="1.800"><path d="M2 8l4-5 4 5M2 14l4 5 4-5" /></svg>
          <div className="ml-[28px] w-[1px] h-[24px] bg-[#ddd]" />
          <I c="ml-[16px] w-[30px] h-[30px]" sw={1.400}><path d="M1 12c5-9 17-9 22 0-5 9-17 9-22 0z" /><circle cx="12" cy="12" r="4" fill="currentColor" /></I>
          <I c="ml-[26px] w-[27px] h-[27px]" sw={1.300}><circle cx="12" cy="12" r="11" /><path d="M12 6.500v.5M10 10.500h2v7M9.500 17.500h5" /></I>
          <div className="ml-[1016px] w-[345px] h-[44px] rounded-[12px] bg-[#f1f1f1] border border-[#d6d6d6] flex items-center pl-[9px] text-[#707070]">
            <Filt c="w-[26px] h-[26px]" />
            <span className="ml-[7px] text-[23px] text-[#c4c4c4]">Filter</span>
          </div>
          <div className="ml-[12px] w-[1px] h-[24px] bg-[#ddd]" />
          <svg viewBox="0 0 24 26" className="ml-[18px] w-[24px] h-[26px]" fill="none" stroke="#e85a9e" strokeWidth="2"><rect x="1" y="1" width="22" height="24" rx="3" /><rect x="4" y="4" width="5" height="18" rx="1" fill="#e85a9e" stroke="none" /></svg>
          <svg viewBox="0 0 24 26" className="ml-[16px] w-[24px] h-[26px]" fill="none" stroke="#737373" strokeWidth="2"><rect x="1" y="1" width="22" height="24" rx="3" /><rect x="15" y="4" width="5" height="18" rx="1" fill="#737373" stroke="none" /></svg>
        </div>
      </div>
    </div>
  );
}

function Inspector() {
  return (
    <div className="flex-1 flex flex-col bg-[#eeedec] border-l-[2px] border-[#d4d3d3] rounded-r-[20px] text-[#767676]">
      <div className="h-[77px] pt-[2px] flex items-center justify-end border-b-[3px] border-[#d8d7d6] shrink-0 pr-[29px]">
        <svg viewBox="0 0 38 30" className="w-[38px] h-[30px]" fill="none" stroke="currentColor" strokeWidth="2"><rect x="1" y="1" width="36" height="28" rx="4" /><path d="M25 1v28M29 7h4M29 11h4M29 15h4" /></svg>
      </div>
      <div className="h-[56px] pt-[2px] flex items-center border-b-[3px] border-[#d8d7d6] shrink-0 pl-[70px] gap-[34px]">
        <svg viewBox="0 0 22 28" className="w-[22px] h-[28px]" fill="none" stroke="currentColor" strokeWidth="1.600"><path d="M2 1h11l7 8v18H2zM13 1v8h7" /></svg>
        <I c="w-[26px] h-[28px]" sw={1.300}><circle cx="12" cy="12" r="11" /><path d="M12.500 5v7.500H7" /></I>
        <I c="w-[26px] h-[28px]" sw={1.300}><circle cx="12" cy="12" r="11" /><path d="M9 9a3 3 0 1 1 4.500 2.600c-1 .6-1.500 1.200-1.500 2.400M12 17.500v.3" /></I>
        <svg viewBox="0 0 26 26" className="w-[26px] h-[26px]" fill="none" stroke="currentColor" strokeWidth="1.600"><rect x="1" y="1" width="24" height="24" rx="2" /><rect x="5" y="5" width="8" height="9" /><path d="M16 6h5M16 10h5M16 14h5M5 19h16" /></svg>
        <svg viewBox="0 0 26 28" className="w-[26px] h-[28px] text-[#e85a9e]" fill="none" stroke="currentColor" strokeWidth="2.600" strokeLinecap="round"><path d="M1 4h24M1 14h24M1 24h24" /><circle cx="19" cy="4" r="2.500" fill="currentColor" /><circle cx="7" cy="14" r="2.500" fill="currentColor" /><circle cx="17" cy="24" r="2.500" fill="currentColor" /></svg>
        <svg viewBox="0 0 26 28" className="w-[26px] h-[28px]" fill="none" stroke="currentColor" strokeWidth="1.800" strokeLinejoin="round"><path d="M2 1v26h23zM7 15v8h7z" /></svg>
        <svg viewBox="0 0 26 28" className="w-[26px] h-[28px]" fill="none" stroke="currentColor" strokeWidth="1.800" strokeLinecap="round"><path d="M20 4A11 11 0 1 0 20 24" /><circle cx="13" cy="14" r="4" fill="currentColor" /><path d="M13 14h12" /></svg>
      </div>
      <div className="flex-1 flex items-center justify-center text-[32px] text-[#808080] pl-[2px]">No Selection</div>
    </div>
  );
}

const paper = 'bg-[repeating-linear-gradient(180deg,#d4d4d4_0,#d4d4d4_3px,#6f6f6f_3px,#6f6f6f_5px)]';

export default function App() {
  return (
    <div className="relative w-[2880px] h-[1800px] overflow-hidden bg-[#1f1216] flex flex-col [font-family:Inter,'Noto_Sans',sans-serif]">
      <div className="absolute left-0 top-0 w-[110px] h-full bg-[linear-gradient(180deg,#8a6d5e_0,#78604f_25%,#5b443b_50%,#6b5046_62%,#3e2a2c_72%,#3f2830_100%)]" />
      <div className="absolute left-[1533px] top-[1374px] w-[1347px] h-[426px] bg-[linear-gradient(90deg,#4f2d3c,#8f5069_50%,#c06f92)]" />
      <div className={`absolute left-[86px] top-[840px] w-[20px] h-[118px] ${paper}`} />
      <div className={`absolute left-[86px] top-[1058px] w-[20px] h-[124px] ${paper}`} />
      <div className="absolute left-[86px] top-[1267px] w-[20px] h-[59px] bg-[#a8a8a8]" />
      <div className="absolute left-[86px] top-[978px] w-[20px] overflow-hidden text-[#c4bbb6] text-[28px] font-bold leading-[32px] whitespace-nowrap">e0<br />02</div>
      <div className="absolute left-[86px] top-[1200px] w-[20px] overflow-hidden text-[#a89f9c] text-[28px] font-bold leading-[34px] whitespace-nowrap">fr<br />si</div>
      <div className="absolute left-[86px] top-[1375px] w-[20px] overflow-hidden text-[#a89f9c] text-[28px] font-bold leading-[34px] whitespace-nowrap">BA<br />cr</div>
      <div className="absolute left-[2864px] top-[198px] text-[#d0ccc9] text-[28px] font-bold leading-[32px]">h<br />y</div>
      <div className="absolute left-[2864px] top-[1553px] text-[#eadfe3] text-[28px] font-bold leading-[32px]">a</div>
      <div className="absolute left-[2864px] top-[316px] w-[4px] h-[82px] bg-[#3c86c2]" />
      <div className="absolute left-[108px] top-[50px] w-[1425px] h-[30px] rounded-t-[20px] bg-[#d8d7d5]" />
      <div className="absolute left-[112px] top-[1770px] w-[1423px] h-[30px] rounded-b-[20px] bg-[linear-gradient(90deg,#9a9a9a,#b4b4b4)]" />
      <div className="absolute left-[1615px] top-[64px] w-[60px] h-[6px] bg-[#c9c9c9] rounded-t-[3px]" />
      <div className="absolute left-[1752px] top-[62px] w-[48px] h-[8px] bg-[#c9c9c9] rounded-t-[3px]" />
      <div className="absolute left-[2462px] top-[63px] w-[36px] h-[8px] bg-[#3c86c2] rounded-t-[3px]" />
      <div className="absolute left-[2734px] top-[60px] w-[68px] h-[10px] bg-[#d8d7d5] rounded-t-[6px]" />
      <Menu />
      <div className="relative flex flex-1 min-h-0">
        <Dock />
        <div className="ml-[18px] mt-[18px] w-[2760px] h-[1718px] rounded-[20px] flex overflow-hidden shadow-[0_0_1px_#0006]">
          <Navigator />
          <Editor />
          <Inspector />
        </div>
      </div>
    </div>
  );
}
